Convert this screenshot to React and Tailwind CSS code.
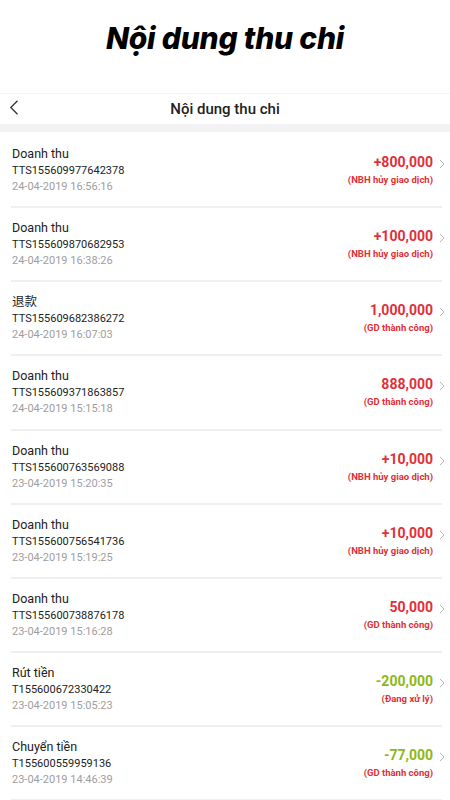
import React from "react";

const rows = [
  { t: "Doanh thu", id: "TTS155609977642378", d: "24-04-2019 16:56:16", a: "+800,000", s: "(NBH hủy giao dịch)", g: false },
  { t: "Doanh thu", id: "TTS155609870682953", d: "24-04-2019 16:38:26", a: "+100,000", s: "(NBH hủy giao dịch)", g: false },
  { t: "退款", id: "TTS155609682386272", d: "24-04-2019 16:07:03", a: "1,000,000", s: "(GD thành công)", g: false },
  { t: "Doanh thu", id: "TTS155609371863857", d: "24-04-2019 15:15:18", a: "888,000", s: "(GD thành công)", g: false },
  { t: "Doanh thu", id: "TTS155600763569088", d: "23-04-2019 15:20:35", a: "+10,000", s: "(NBH hủy giao dịch)", g: false },
  { t: "Doanh thu", id: "TTS155600756541736", d: "23-04-2019 15:19:25", a: "+10,000", s: "(NBH hủy giao dịch)", g: false },
  { t: "Doanh thu", id: "TTS155600738876178", d: "23-04-2019 15:16:28", a: "50,000", s: "(GD thành công)", g: false },
  { t: "Rút tiền", id: "T155600672330422", d: "23-04-2019 15:05:23", a: "-200,000", s: "(Đang xử lý)", g: true },
  { t: "Chuyển tiền", id: "T155600559959136", d: "23-04-2019 14:46:39", a: "-77,000", s: "(GD thành công)", g: true },
];

function Chevron() {
  return (
    <svg width="6" height="10" viewBox="0 0 6 10" className="ml-[6px]">
      <path d="M1 1 L5 5 L1 9" fill="none" stroke="#b5b5b5" strokeWidth="1" />
    </svg>
  );
}

export default function App() {
  return (
    <div className="w-[450px] h-[800px] bg-white overflow-hidden" style={{ fontFamily: "Roboto, 'Noto Sans CJK SC', sans-serif" }}>
      <div className="h-[93px] flex items-center justify-center pb-[17px]">
        <h1 className="text-[30px] font-extrabold italic text-black tracking-[-0.2px]" style={{ fontFamily: "Inter, Roboto, sans-serif" }}>
          Nội dung thu chi
        </h1>
      </div>
      <div className="h-[31px] relative flex items-center justify-center bg-white border-t border-[#f4f4f4]">
        <svg width="10" height="15" viewBox="0 0 10 15" className="absolute left-[9px] top-[6px]">
          <path d="M8.5 0.8 L1.8 7.5 L8.5 14.2" fill="none" stroke="#333" strokeWidth="1.3" />
        </svg>
        <span className="text-[15px] font-medium text-[#222]">Nội dung thu chi</span>
      </div>
      <div className="h-[8px] bg-[#f2f2f4]" />
      <div className="mt-[2px]">
        {rows.map((r, i) => (
          <div key={i} className="h-[74.14px] flex flex-col">
            <div className="flex-1 flex justify-between pl-[12px] pr-[5px]">
              <div className="pt-[11px]">
                <div className="text-[12.5px] leading-[17px] text-[#222]">{r.t}</div>
                <div className="text-[11px] leading-[17px] text-[#222]">{r.id}</div>
                <div className="text-[11px] leading-[16px] text-[#9e9e9e]">{r.d}</div>
              </div>
              <div className="pt-[19px] flex items-start">
                <div className="flex flex-col items-end">
                  <div className={`text-[14px] leading-[18px] font-bold ${r.g ? "text-[#8cb721]" : "text-[#e0303a]"}`}>{r.a}</div>
                  <div className="text-[9.5px] leading-[14px] font-bold text-[#e0303a] mt-[2px]">{r.s}</div>
                </div>
                <div className="pt-[6px]"><Chevron /></div>
              </div>
            </div>
            <div className="h-[2px] bg-[#efefef] ml-[11px] mr-[8px]" />
          </div>
        ))}
      </div>
    </div>
  );
}
